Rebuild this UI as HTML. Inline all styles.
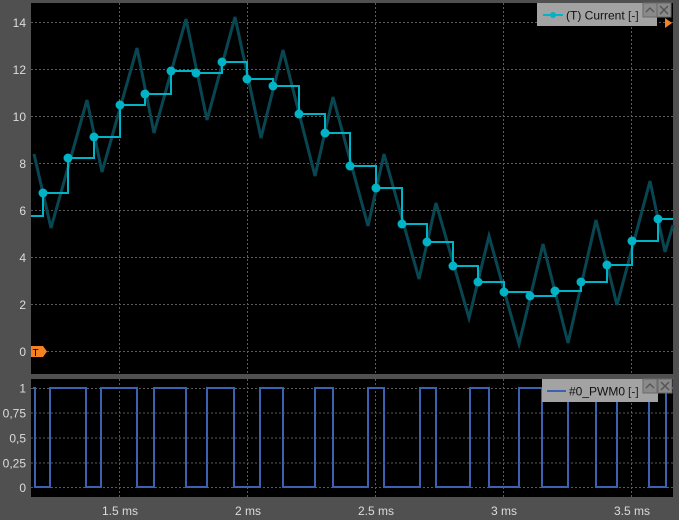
<!DOCTYPE html>
<html><head><meta charset="utf-8"><style>
html,body{margin:0;padding:0;background:#505050;width:679px;height:520px;overflow:hidden}
svg{display:block;font-family:"Liberation Sans",sans-serif}
</style></head><body>
<svg width="679" height="520" viewBox="0 0 679 520" xmlns="http://www.w3.org/2000/svg">
<rect width="679" height="520" fill="#505050"/>
<rect x="31" y="3" width="642" height="371" fill="#000"/>
<g stroke="#5a5a5a" stroke-width="1" stroke-dasharray="2,2">
<line x1="31" x2="673" y1="22.5" y2="22.5"/><line x1="31" x2="673" y1="69.5" y2="69.5"/>
<line x1="31" x2="673" y1="116.5" y2="116.5"/><line x1="31" x2="673" y1="163.5" y2="163.5"/>
<line x1="31" x2="673" y1="210.5" y2="210.5"/><line x1="31" x2="673" y1="257.5" y2="257.5"/>
<line x1="31" x2="673" y1="304.5" y2="304.5"/><line x1="31" x2="673" y1="351.5" y2="351.5"/>
<line x1="119.5" x2="119.5" y1="3" y2="374"/><line x1="247.5" x2="247.5" y1="3" y2="374"/>
<line x1="375.5" x2="375.5" y1="3" y2="374"/><line x1="503.5" x2="503.5" y1="3" y2="374"/>
<line x1="631.5" x2="631.5" y1="3" y2="374"/>
</g>
<polyline fill="none" stroke="#084752" stroke-width="3"
points="34,154 51,228 87,100 102,172 137,48 154,133 186,19 207,120 235,17 261,138 283,50 315,176 333,97 368,226 384,154 419,279 436,203 469,318 489,236 519,344 543,244 568,343 596,220 617,305 650,181 665,252 673,225"/>
<polyline fill="none" stroke="#00b3c6" stroke-width="2"
points="31,216 43,216 43,193 68,193 68,158 94,158 94,137 120,137 120,105 145,105 145,94 171,94 171,71 196,71 196,73 222,73 222,62 247,62 247,79 273,79 273,86 299,86 299,114 325,114 325,133 350,133 350,166 376,166 376,188 402,188 402,224 427,224 427,242 453,242 453,266 478,266 478,282 504,282 504,292 530,292 530,296 555,296 555,291 581,291 581,282 607,282 607,265 632,265 632,241 658,241 658,219 673,219"/>
<g fill="#00b3c6">
<circle cx="43" cy="193" r="4.5"/><circle cx="68" cy="158" r="4.5"/><circle cx="94" cy="137" r="4.5"/>
<circle cx="120" cy="105" r="4.5"/><circle cx="145" cy="94" r="4.5"/><circle cx="171" cy="71" r="4.5"/>
<circle cx="196" cy="73" r="4.5"/><circle cx="222" cy="62" r="4.5"/><circle cx="247" cy="79" r="4.5"/>
<circle cx="273" cy="86" r="4.5"/><circle cx="299" cy="114" r="4.5"/><circle cx="325" cy="133" r="4.5"/>
<circle cx="350" cy="166" r="4.5"/><circle cx="376" cy="188" r="4.5"/><circle cx="402" cy="224" r="4.5"/>
<circle cx="427" cy="242" r="4.5"/><circle cx="453" cy="266" r="4.5"/><circle cx="478" cy="282" r="4.5"/>
<circle cx="504" cy="292" r="4.5"/><circle cx="530" cy="296" r="4.5"/><circle cx="555" cy="291" r="4.5"/>
<circle cx="581" cy="282" r="4.5"/><circle cx="607" cy="265" r="4.5"/><circle cx="632" cy="241" r="4.5"/>
<circle cx="658" cy="219" r="4.5"/>
</g>
<path d="M31,346 H43 L47,351.5 L43,357 H31 Z" fill="#f58220"/>
<text x="32.5" y="356" font-size="10" fill="#000">T</text>
<path d="M665,18 L672,23 L665,28 Z" fill="#f58220"/>
<rect x="537" y="3" width="120" height="23" fill="#a3a3a3"/>
<line x1="543" x2="563" y1="15" y2="15" stroke="#00b3c6" stroke-width="2"/>
<circle cx="553" cy="15" r="3" fill="#00b3c6"/>
<text x="566" y="19.5" font-size="12" fill="#111">(T) Current</text>
<text x="628" y="19.5" font-size="12" fill="#222">[-]</text>
<rect x="643" y="3" width="14" height="14" fill="#8a8a8a" stroke="#6a6a6a"/>
<path d="M646,12 L650,8 L654,12" fill="none" stroke="#555" stroke-width="1.3"/>
<rect x="657" y="3" width="14" height="14" fill="#8a8a8a" stroke="#6a6a6a"/>
<path d="M660,6 L668,14 M668,6 L660,14" stroke="#555" stroke-width="1.5"/>
<rect x="31" y="379" width="642" height="118" fill="#000"/>
<g stroke="#5a5a5a" stroke-width="1" stroke-dasharray="2,2">
<line x1="31" x2="673" y1="388.5" y2="388.5"/><line x1="31" x2="673" y1="413" y2="413"/>
<line x1="31" x2="673" y1="438" y2="438"/><line x1="31" x2="673" y1="463" y2="463"/>
<line x1="31" x2="673" y1="487.5" y2="487.5"/>
<line x1="119.5" x2="119.5" y1="379" y2="497"/><line x1="247.5" x2="247.5" y1="379" y2="497"/>
<line x1="375.5" x2="375.5" y1="379" y2="497"/><line x1="503.5" x2="503.5" y1="379" y2="497"/>
<line x1="631.5" x2="631.5" y1="379" y2="497"/>
</g>
<polyline fill="none" stroke="#3a62b0" stroke-width="2"
points="33,388 35,388 35,487 50,487 50,388 86,388 86,487 101,487 101,388 137,388 137,487 154,487 154,388 186,388 186,487 207,487 207,388 234,388 234,487 260,487 260,388 283,388 283,487 315,487 315,388 333,388 333,487 368,487 368,388 384,388 384,487 420,487 420,388 436,388 436,487 470,487 470,388 489,388 489,487 519,487 519,388 542,388 542,487 568,487 568,388 596,388 596,487 617,487 617,388 649,388 649,487 666,487 666,388 673,388"/>
<rect x="542" y="379" width="116" height="23" fill="#a3a3a3"/>
<line x1="547" x2="566" y1="391" y2="391" stroke="#3a62b0" stroke-width="2"/>
<text x="569" y="395.5" font-size="12" fill="#111">#0_PWM0</text>
<text x="628" y="395.5" font-size="12" fill="#222">[-]</text>
<rect x="643" y="379" width="14" height="14" fill="#8a8a8a" stroke="#6a6a6a"/>
<path d="M646,388 L650,384 L654,388" fill="none" stroke="#555" stroke-width="1.3"/>
<rect x="658" y="379" width="14" height="14" fill="#8a8a8a" stroke="#6a6a6a"/>
<path d="M661,382 L669,390 M669,382 L661,390" stroke="#555" stroke-width="1.5"/>
<g fill="#dcdcdc" font-size="12" text-anchor="end">
<text x="26" y="27">14</text><text x="26" y="74">12</text><text x="26" y="121">10</text>
<text x="26" y="168">8</text><text x="26" y="215">6</text><text x="26" y="262">4</text>
<text x="26" y="309">2</text><text x="26" y="356">0</text>
<text x="26" y="392.5">1</text><text x="26" y="417.5">0,75</text><text x="26" y="442.5">0,5</text>
<text x="26" y="467.5">0,25</text><text x="26" y="492">0</text>
</g>
<g fill="#dcdcdc" font-size="12" text-anchor="middle">
<text x="120" y="515">1.5 ms</text><text x="248" y="515">2 ms</text><text x="376" y="515">2.5 ms</text>
<text x="504" y="515">3 ms</text><text x="632" y="515">3.5 ms</text>
</g>
</svg>
</body></html>
